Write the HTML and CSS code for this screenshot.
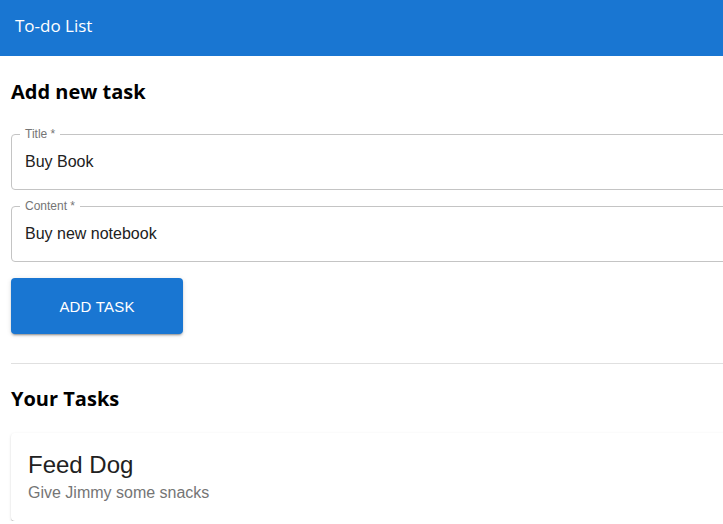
FILE: index.html
```html
<!DOCTYPE html>
<html lang="en">
<head>
<meta charset="utf-8">
<title>To-do List</title>
<link rel="stylesheet" href="styles.css">
</head>
<body>
<header class="appbar">
  <span class="appbar-title">To-do List</span>
</header>
<main class="page">
  <h2 class="section-title">Add new task</h2>
  <form class="task-form">
    <div class="field">
      <label class="field-label">Title *</label>
      <input class="field-input" type="text" value="Buy Book">
    </div>
    <div class="field">
      <label class="field-label">Content *</label>
      <input class="field-input" type="text" value="Buy new notebook">
    </div>
    <button class="btn" type="button">ADD TASK</button>
  </form>
  <hr class="divider">
  <h2 class="section-title tasks-title">Your Tasks</h2>
  <div class="card">
    <div class="card-title">Feed Dog</div>
    <div class="card-body">Give Jimmy some snacks</div>
  </div>
</main>
</body>
</html>
```
FILE: styles.css
```css
html, body {
  margin: 0;
  padding: 0;
  overflow: hidden;
  background: #fff;
}
.appbar {
  height: 56px;
  box-sizing: border-box;
  background: #1976d2;
  padding: 14px 0 0 15px;
}
.appbar-title {
  color: #fff;
  font-family: "Open Sans", sans-serif;
  font-size: 17px;
  line-height: 24px;
}
.page {
  width: 800px;
  padding: 0 11px;
  box-sizing: content-box;
}
.section-title {
  font-family: "Open Sans", sans-serif;
  font-weight: 700;
  font-size: 20px;
  line-height: 24px;
  margin: 0;
  padding-top: 24px;
  color: #000;
}
.task-form {
  display: flex;
  flex-direction: column;
  align-items: flex-start;
  gap: 16px;
  margin-top: 30px;
}
.field {
  position: relative;
  width: 100%;
  height: 54px;
  border: 1px solid #c4c4c4;
  border-radius: 4px;
  box-sizing: content-box;
  display: flex;
  align-items: center;
}
.field-label {
  position: absolute;
  top: -8px;
  left: 8px;
  padding: 0 5px;
  background: #fff;
  font-family: "Liberation Sans", Arial, sans-serif;
  font-size: 12px;
  line-height: 14px;
  color: #757575;
}
.field-input {
  border: 0;
  outline: none;
  background: transparent;
  width: 100%;
  padding: 0 13px;
  font-family: "Liberation Sans", Arial, sans-serif;
  font-size: 16px;
  color: #212121;
}
.btn {
  width: 172px;
  height: 56px;
  border: 0;
  border-radius: 4px;
  background: #1976d2;
  color: #fff;
  font-family: "Liberation Sans", Arial, sans-serif;
  font-size: 15px;
  letter-spacing: 0.2px;
  box-shadow: 0 3px 1px -2px rgba(0,0,0,0.2), 0 2px 2px 0 rgba(0,0,0,0.14), 0 1px 5px 0 rgba(0,0,0,0.12);
}
.divider {
  border: 0;
  border-top: 1px solid #e0e0e0;
  margin: 29px 0 0 0;
}
.tasks-title {
  padding-top: 23px;
}
.card {
  margin-top: 22px;
  padding: 16px 16px 16px 17px;
  border-radius: 4px;
  background: #fff;
  box-shadow: 0 2px 1px -1px rgba(0,0,0,0.2), 0 1px 1px 0 rgba(0,0,0,0.14), 0 1px 3px 0 rgba(0,0,0,0.12);
  font-family: "Liberation Sans", Arial, sans-serif;
}
.card-title {
  font-size: 24px;
  line-height: 32px;
  color: #212121;
}
.card-body {
  font-size: 16px;
  line-height: 24px;
  color: #757575;
}
```
